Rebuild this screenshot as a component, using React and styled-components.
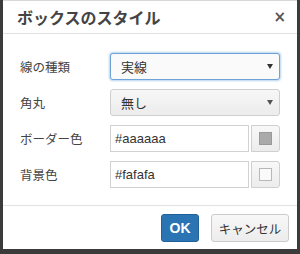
import React from "react";
import styled, { createGlobalStyle } from "styled-components";

const GlobalStyle = createGlobalStyle`
    html, body {
        margin: 0;
        padding: 0;
        background: #3b3b3b;
    }
    body {
        font-family: "Liberation Sans", "Noto Sans CJK JP", sans-serif;
        color: #333;
    }
`;

const Backdrop = styled.div`
    width: 300px;
    height: 254px;
    background: #3b3b3b;
    padding: 0 3px 5px 3px;
    box-sizing: border-box;
`;

const Dialog = styled.div`
    width: 294px;
    height: 249px;
    background: #fff;
    display: flex;
    flex-direction: column;
    box-sizing: border-box;
    border-top: 1px solid #d8d8d8;
`;

const Header = styled.div`
    height: 32px;
    display: flex;
    align-items: center;
    justify-content: space-between;
    padding: 0 11px 0 14px;
    border-bottom: 1px solid #e2e2e2;
    flex-shrink: 0;
`;

const Title = styled.div`
    font-family: "Noto Sans CJK JP", sans-serif;
    font-weight: 700;
    font-size: 16px;
    color: #444;
`;

const Close = styled.div`
    font-family: "DejaVu Sans", sans-serif;
    font-weight: 700;
    font-size: 15px;
    color: #555;
    line-height: 1;
`;

const Body = styled.div`
    flex: 1;
    padding: 19px 14px 0 17px;
    display: flex;
    flex-direction: column;
    gap: 9px;
`;

const Row = styled.div`
    display: grid;
    grid-template-columns: 90px 170px;
    align-items: center;
    height: 27px;
`;

const Label = styled.div`
    font-family: "Noto Sans CJK JP", sans-serif;
    font-size: 12.5px;
    color: #444;
`;

const Select = styled.div`
    height: 27px;
    box-sizing: border-box;
    border: 1px solid ${p => (p.focused ? "#6fa3d6" : "#cfcfcf")};
    border-radius: 3px;
    background: ${p => (p.focused ? "#fafafa" : "linear-gradient(#f7f7f7, #ececec)")};
    box-shadow: ${p => (p.focused ? "0 0 2px 1px rgba(91,157,217,0.45)" : "none")};
    display: flex;
    align-items: center;
    justify-content: space-between;
    padding: 0 6px 0 10px;
    font-family: "Noto Sans CJK JP", sans-serif;
    font-size: 13px;
    color: #333;
`;

const Caret = styled.span`
    width: 0;
    height: 0;
    border-left: 3.5px solid transparent;
    border-right: 3.5px solid transparent;
    border-top: 5px solid ${p => (p.focused ? "#333" : "#555")};
`;

const ColorGroup = styled.div`
    display: flex;
    height: 27px;
    gap: 2px;
`;

const TextInput = styled.div`
    flex: 1;
    box-sizing: border-box;
    border: 1px solid #d2d2d2;
    background: #fff;
    display: flex;
    align-items: center;
    padding-left: 4px;
    font-size: 13px;
    color: #333;
`;

const SwatchButton = styled.div`
    width: 29px;
    box-sizing: border-box;
    border: 1px solid #cfcfcf;
    border-radius: 0 3px 3px 0;
    background: linear-gradient(#f8f8f8, #ececec);
    display: flex;
    align-items: center;
    justify-content: center;
`;

const Swatch = styled.span`
    width: 11px;
    height: 11px;
    background: ${p => p.color};
    border: 1px solid ${p => p.edge};
`;

const Footer = styled.div`
    border-top: 1px solid #e2e2e2;
    padding: 8px 8px 7px 0;
    display: flex;
    justify-content: flex-end;
    gap: 12px;
    flex-shrink: 0;
`;

const Button = styled.div`
    height: 28px;
    box-sizing: border-box;
    display: flex;
    align-items: center;
    justify-content: center;
    border-radius: 3px;
    white-space: nowrap;
    font-family: "Noto Sans CJK JP", sans-serif;
    ${p =>
        p.primary
            ? `
        background: #2a74b4;
        border: 1px solid #22609a;
        color: #fff;
        font-weight: 700;
        font-size: 14px;
        font-family: "Liberation Sans", sans-serif;
        width: 38px;
    `
            : `
        background: linear-gradient(#f8f8f8, #ececec);
        border: 1px solid #cbcbcb;
        color: #333;
        font-size: 12.5px;
        width: 78px;
    `}
`;

const colors = [
    { label: "ボーダー色", value: "#aaaaaa", color: "#aaaaaa", edge: "#999" },
    { label: "背景色", value: "#fafafa", color: "#fafafa", edge: "#b8b8b8" },
];

export default function App() {
    return (
        <>
            <GlobalStyle />
            <Backdrop>
                <Dialog>
                    <Header>
                        <Title>ボックスのスタイル</Title>
                        <Close>×</Close>
                    </Header>
                    <Body>
                        <Row>
                            <Label>線の種類</Label>
                            <Select focused>
                                実線
                                <Caret focused />
                            </Select>
                        </Row>
                        <Row>
                            <Label>角丸</Label>
                            <Select>
                                無し
                                <Caret />
                            </Select>
                        </Row>
                        {colors.map(c => (
                            <Row key={c.label}>
                                <Label>{c.label}</Label>
                                <ColorGroup>
                                    <TextInput>{c.value}</TextInput>
                                    <SwatchButton>
                                        <Swatch color={c.color} edge={c.edge} />
                                    </SwatchButton>
                                </ColorGroup>
                            </Row>
                        ))}
                    </Body>
                    <Footer>
                        <Button primary>OK</Button>
                        <Button>キャンセル</Button>
                    </Footer>
                </Dialog>
            </Backdrop>
        </>
    );
}
